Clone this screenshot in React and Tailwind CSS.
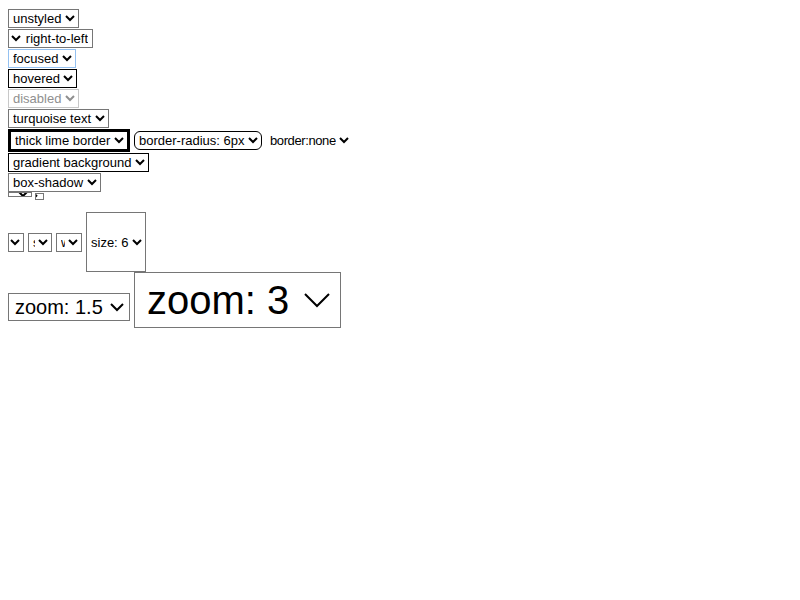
const sans = "font-['Liberation_Sans',Arial,sans-serif] text-[13px] leading-normal";
const zoomed = "font-['Liberation_Sans',Arial,sans-serif] text-[13.333px] leading-normal";
const base = `${sans} text-black bg-white border border-[#767676] rounded-none h-[19px]`;

function Opt({ children }) {
  return <option>{children}</option>;
}

export default function App() {
  return (
    <div className="p-2 font-['Liberation_Serif',serif] text-[16px] text-black bg-white min-h-screen">
      <div className="flex items-end h-[20px]">
        <select className={base}><Opt>unstyled</Opt></select>
      </div>
      <div className="flex items-end h-[20px]">
        <select dir="rtl" className={base}><Opt>right-to-left</Opt></select>
      </div>
      <div className="flex items-end h-[20px]">
        <select className={`${sans} h-[19px] text-black bg-white border border-[#94c1f1] rounded-none`}><Opt>focused</Opt></select>
      </div>
      <div className="flex items-end h-[20px]">
        <select className={`${sans} h-[19px] text-black bg-white border border-black rounded-none`}><Opt>hovered</Opt></select>
      </div>
      <div className="flex items-end h-[20px]">
        <select disabled className={`${sans} h-[19px] text-[#8f8f8f] bg-white border border-[#c8c8c8] rounded-none`}><Opt>disabled</Opt></select>
      </div>
      <div className="flex items-end h-[20px]">
        <select className={`${base} w-[101px]`}><Opt>turquoise text</Opt></select>
      </div>
      <div className="flex items-baseline gap-1 h-[24px] pt-[1px]">
        <select className={`${sans} h-[23px] w-[122px] text-black bg-white border-[3px] border-black rounded-none`}><Opt>thick lime border</Opt></select>
        <select className={`${sans} h-[19px] text-black bg-white border border-black rounded-[6px]`}><Opt>border-radius: 6px</Opt></select>
        <select className={`${sans} tracking-[-0.4px] text-black bg-white border-0 rounded-none`}><Opt>border:none</Opt></select>
      </div>
      <div className="flex items-end h-[20px]">
        <select className={`${sans} h-[19px] text-black bg-white border border-black rounded-none`}><Opt>gradient background</Opt></select>
      </div>
      <div className="flex items-end h-[20px]">
        <select className={base}><Opt>box-shadow</Opt></select>
      </div>
      <div className="flex items-start gap-[3px] h-[20px]">
        <select className={`${sans} text-black bg-white border border-[#767676] rounded-none w-[24px] h-[5px]`}><Opt>x</Opt></select>
        <select className={`${sans} text-black bg-white border border-[#767676] rounded-none w-[9px] h-[7px] mt-[1px]`}><Opt>x</Opt></select>
      </div>
      <div className="flex items-center gap-1 h-[60px]">
        <select className={`${base} w-[16px] h-[17px]`}><Opt>size</Opt></select>
        <select className={`${base} w-[24px] h-[17px]`}><Opt>size</Opt></select>
        <select className={`${base} w-[26px] h-[17px]`}><Opt>width</Opt></select>
        <select className={`${sans} text-black bg-white border border-[#767676] rounded-none w-[60px] h-[60px]`}><Opt>size: 6</Opt></select>
      </div>
      <div className="flex items-start gap-1">
        <select className={`${zoomed} text-black bg-white border-[0.67px] border-[#767676] rounded-none [zoom:1.5] w-[81.33px] h-[18.67px] mt-[14px]`}><Opt>zoom: 1.5</Opt></select>
        <select className={`${zoomed} text-black bg-white border-[0.34px] border-[#767676] rounded-none [zoom:3] w-[69px] h-[18.67px]`}><Opt>zoom: 3</Opt></select>
      </div>
    </div>
  );
}
